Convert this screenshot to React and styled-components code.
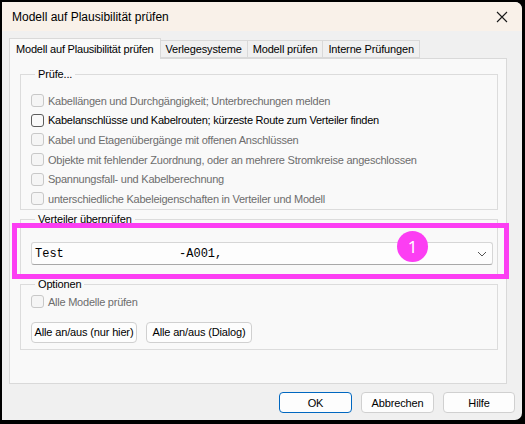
import React from "react";
import styled, { createGlobalStyle } from "styled-components";

const GlobalStyle = createGlobalStyle`
  html, body {
    margin: 0;
    padding: 0;
    background: #000;
    width: 525px;
    height: 424px;
    overflow: hidden;
  }
  body {
    font-family: "Liberation Sans", Arial, sans-serif;
    font-size: 11px;
    color: #000;
  }
`;

const Frame = styled.div`
  padding: 2px 3px 4px 2px;
`;

const Window = styled.div`
  position: relative;
  width: 520px;
  height: 418px;
  background: #f0f0f0;
  border-radius: 0 7px 7px 0;
  overflow: hidden;
  display: flex;
  flex-direction: column;
`;

const TitleBar = styled.div`
  height: 29px;
  flex: none;
  background: #f9f1e9;
  display: flex;
  align-items: center;
  justify-content: space-between;
  padding: 0 0 0 10px;
  font-size: 12px;
`;

const CloseButton = styled.div`
  width: 40px;
  height: 29px;
  display: flex;
  align-items: center;
  justify-content: center;
`;

const Body = styled.div`
  flex: 1;
  display: flex;
  flex-direction: column;
  padding: 7px 7px 0 7px;
`;

const TabStrip = styled.div`
  display: flex;
  align-items: flex-end;
  height: 20px;
  position: relative;
  z-index: 1;
`;

const Tab = styled.div`
  height: ${(p) => (p.$active ? "21px" : "18px")};
  margin-bottom: ${(p) => (p.$active ? "-1px" : "0")};
  padding: 0 ${(p) => (p.$active ? "6px" : "5px")};
  box-sizing: border-box;
  display: flex;
  align-items: center;
  background: ${(p) => (p.$active ? "#f9f9f9" : "#f0f0f0")};
  border: 1px solid #d9d9d9;
  border-bottom: ${(p) => (p.$active ? "none" : "1px solid #d9d9d9")};
  margin-left: ${(p) => (p.$first ? "0" : "-1px")};
  letter-spacing: ${(p) => (p.$active ? "-0.2px" : "-0.15px")};
  white-space: nowrap;
`;

const Panel = styled.div`
  width: 498px;
  height: 326px;
  box-sizing: border-box;
  border: 1px solid #d9d9d9;
  background: #f9f9f9;
  padding: 8px 8px 0 10px;
  display: flex;
  flex-direction: column;
  gap: 1px;
`;

const Group = styled.fieldset`
  margin: ${(p) => p.$margin || "0"};
  padding: ${(p) => p.$pad || "0"};
  border: 1px solid #dcdcdc;
  border-radius: 0;
  min-width: 0;
  height: ${(p) => p.$height};
  box-sizing: border-box;

  legend {
    padding: 0 3px;
    margin-left: 4px;
    line-height: 14px;
    letter-spacing: -0.15px;
  }
`;

const CheckList = styled.div`
  display: flex;
  flex-direction: column;
`;

const CheckRow = styled.label`
  display: flex;
  align-items: center;
  gap: 4px;
  height: 19.6px;
  color: ${(p) => (p.$disabled ? "#6d6d6d" : "#000")};
  letter-spacing: -0.24px;
  white-space: nowrap;
`;

const Box = styled.span`
  width: 13px;
  height: 13px;
  box-sizing: border-box;
  border-radius: 3px;
  border: 1px solid ${(p) => (p.$disabled ? "#c8c8c8" : "#5c5c5c")};
  background: ${(p) => (p.$disabled ? "#f5f5f5" : "#f9f9f9")};
  flex: none;
`;

const Combo = styled.div`
  height: 23px;
  box-sizing: border-box;
  border: 1px solid #d6d6d6;
  border-bottom-color: #a8a8a8;
  border-radius: 3px;
  background: #fdfdfd;
  display: flex;
  align-items: center;
  justify-content: space-between;
  padding: 0 5px 0 3px;
`;

const ComboText = styled.span`
  font-family: "Liberation Mono", "Courier New", monospace;
  font-size: 12px;
  white-space: pre;
`;

const ButtonRow = styled.div`
  display: flex;
  gap: ${(p) => p.$gap || "9px"};
  margin-top: ${(p) => p.$top || "0"};
  justify-content: ${(p) => p.$justify || "flex-start"};
`;

const Button = styled.button`
  width: ${(p) => p.$width || "auto"};
  height: 21px;
  box-sizing: border-box;
  padding: 0 2px;
  font-family: inherit;
  font-size: 11px;
  letter-spacing: -0.15px;
  color: #000;
  background: #fdfdfd;
  border: 1px solid ${(p) => (p.$default ? "#0067c0" : "#d0d0d0")};
  border-radius: 4px;
  white-space: nowrap;
`;

const Footer = styled.div`
  padding: 8px 0 0 0;
`;

const Highlight = styled.div`
  position: absolute;
  left: 10px;
  top: 221px;
  width: 497px;
  height: 56px;
  box-sizing: border-box;
  border: 5px solid #fc3ef3;
  pointer-events: none;
`;

const Badge = styled.div`
  position: absolute;
  left: 395px;
  top: 229px;
  width: 31px;
  height: 31px;
  border-radius: 50%;
  background: #fc3ef3;
  color: #fff;
  font-family: "Noto Sans", sans-serif;
  font-size: 17px;
  display: flex;
  align-items: center;
  justify-content: center;
`;

const checks = [
  { label: "Kabellängen und Durchgängigkeit; Unterbrechungen melden", disabled: true },
  { label: "Kabelanschlüsse und Kabelrouten; kürzeste Route zum Verteiler finden" },
  { label: "Kabel und Etagenübergänge mit offenen Anschlüssen", disabled: true },
  { label: "Objekte mit fehlender Zuordnung, oder an mehrere Stromkreise angeschlossen", disabled: true },
  { label: "Spannungsfall- und Kabelberechnung", disabled: true },
  { label: "unterschiedliche Kabeleigenschaften in Verteiler und Modell", disabled: true },
];

const tabs = ["Modell auf Plausibilität prüfen", "Verlegesysteme", "Modell prüfen", "Interne Prüfungen"];

function Check({ label, disabled }) {
  return (
    <CheckRow $disabled={disabled}>
      <Box $disabled={disabled} />
      {label}
    </CheckRow>
  );
}

export default function App() {
  return (
    <Frame>
      <GlobalStyle />
      <Window>
        <TitleBar>
          <span>Modell auf Plausibilität prüfen</span>
          <CloseButton>
            <svg width="12" height="12" viewBox="0 0 12 12">
              <path d="M1 1L11 11M11 1L1 11" stroke="#1a1a1a" strokeWidth="1.1" />
            </svg>
          </CloseButton>
        </TitleBar>
        <Body>
          <TabStrip>
            {tabs.map((t, i) => (
              <Tab key={t} $active={i === 0} $first={i === 0}>
                {t}
              </Tab>
            ))}
          </TabStrip>
          <Panel>
            <Group $height="143px" $pad="10px 10px 0 10px">
              <legend>Prüfe...</legend>
              <CheckList>
                {checks.map((c) => (
                  <Check key={c.label} {...c} />
                ))}
              </CheckList>
            </Group>
            <Group $height="64px" $pad="16px 4px 0 10px" $margin="1px 0 0 0">
              <legend>Verteiler überprüfen</legend>
              <Combo>
                <ComboText>{"Test                -A001,"}</ComboText>
                <svg width="10" height="6" viewBox="0 0 10 6">
                  <path d="M1 1L5 5L9 1" fill="none" stroke="#555" strokeWidth="1" />
                </svg>
              </Combo>
            </Group>
            <Group $height="73px" $pad="1px 10px 0 10px">
              <legend>Optionen</legend>
              <Check label="Alle Modelle prüfen" disabled />
              <ButtonRow $top="10px">
                <Button $width="106px">Alle an/aus (nur hier)</Button>
                <Button $width="106px">Alle an/aus (Dialog)</Button>
              </ButtonRow>
            </Group>
          </Panel>
          <Footer>
            <ButtonRow $justify="flex-end" $gap="9px">
              <Button $width="73px" $default>OK</Button>
              <Button $width="73px">Abbrechen</Button>
              <Button $width="72px">Hilfe</Button>
            </ButtonRow>
          </Footer>
        </Body>
        <Highlight />
        <Badge>1</Badge>
      </Window>
    </Frame>
  );
}
